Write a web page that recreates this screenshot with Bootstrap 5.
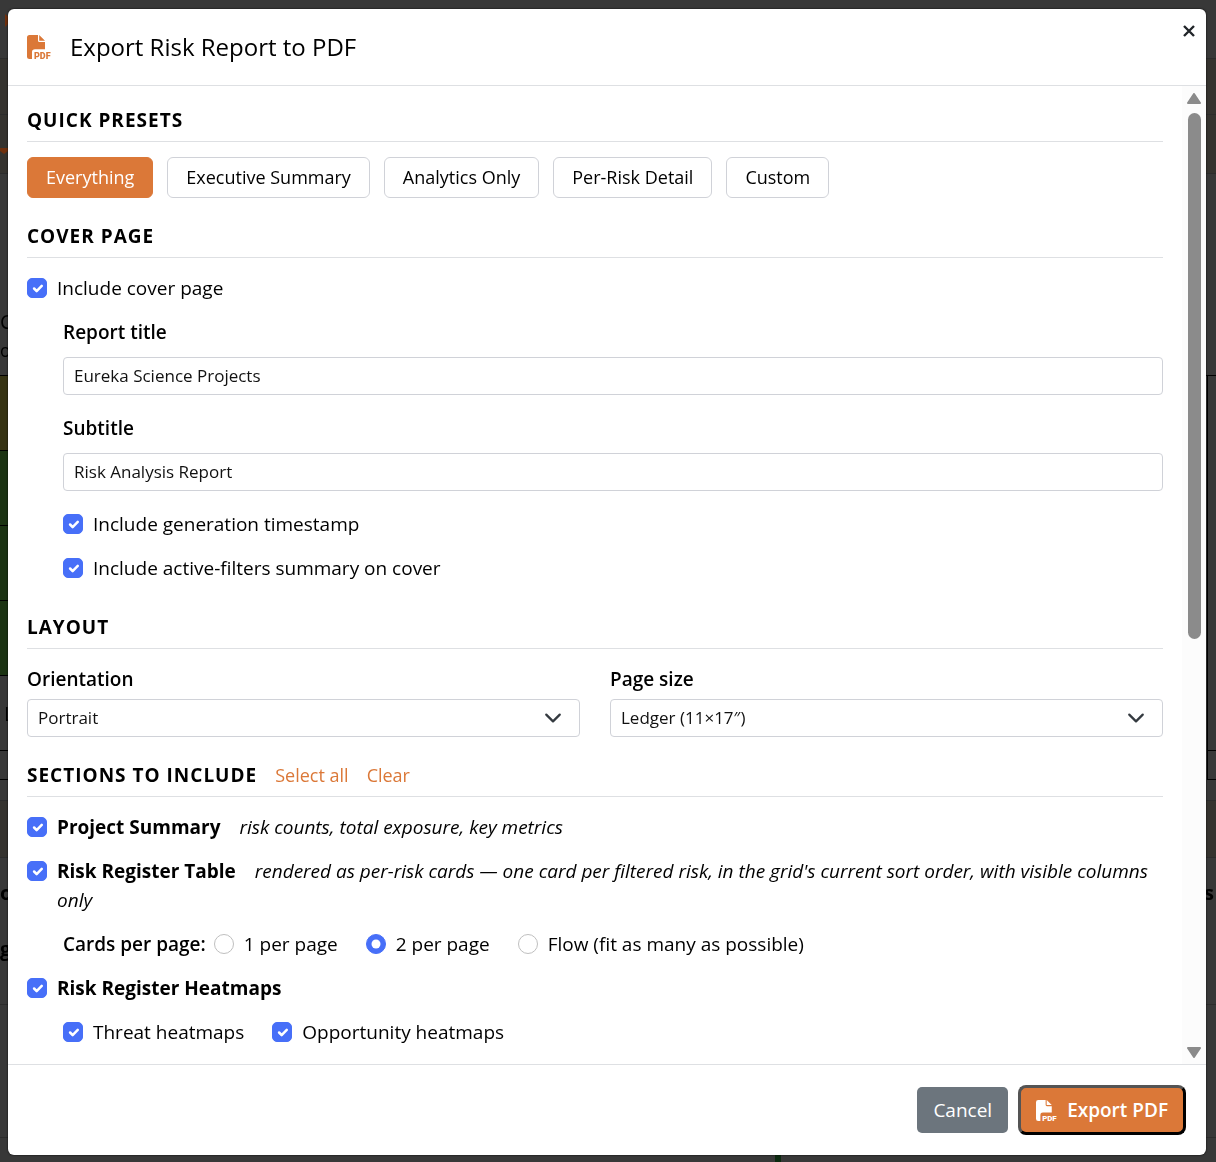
<!DOCTYPE html>
<html lang="en">
<head>
<meta charset="utf-8">
<meta name="viewport" content="width=device-width, initial-scale=1">
<title>Export Risk Report to PDF</title>
<link href="https://cdn.jsdelivr.net/npm/bootstrap@5.3.0/dist/css/bootstrap.min.css" rel="stylesheet">
<style>
:root{--accent:#db7838;--blue:#476ff8;--line:#dee0e3}
body{font-family:"Open Sans",sans-serif;font-size:19px;line-height:29px;color:#000;background:#383838}
/* dimmed page behind the dialog */
.under{position:fixed;inset:0;z-index:0;overflow:hidden;font-size:20px;color:#000}
.under .strip{width:12px;overflow:hidden}
.under .strip>div{border-bottom:1px solid #2c2c2c;flex:none;white-space:nowrap;line-height:28px;overflow:hidden}
.under .warm{background:#35332f}
.under .cell{border-color:#000!important}
.under .h59{height:59px}
.under .h56{height:56px}
.under .h202{height:202px}
.under .h75{height:75px}
.under .h29{height:29px}
.under .h21{height:21px}
.under .h57{height:57px}
.under .h147{height:147px}
.under .h133{height:133px}
.under .h375{height:375px}
.under .edge{border-left:1px solid #000;margin-left:3px}
.under .olive{background:#363313}
.under .green{background:#1b3312}
.under .sliver{width:6px;height:8px;background:#0c2a10;margin-left:64%}
.under .drop-name{padding-top:134px}
.under .drop-code{padding-top:24px}
.under .drop-word{padding-top:21px;font-weight:700;line-height:29px}
.shell{position:relative;z-index:1;height:100vh;min-height:700px;padding:9px 10px 7px 8px}
.dialog{border-radius:6px;background:#fff;box-shadow:0 0 2px #000;overflow:hidden}
.dlg-head{padding-left:19px;height:77px;border-bottom:1px solid var(--line)}
.dlg-head h1{font-size:24px;line-height:32px;font-weight:400;margin:0}
.dlg-head .title-row{gap:19px}
.dlg-close{border:0;background:none;padding:0;width:14px;height:14px;margin:15px 10px 0 0;display:flex}
.pdf-icon{color:var(--accent);overflow:visible;flex:none}
.pdf-icon text,.act text{font:900 9px Roboto,sans-serif}
.dlg-body{padding:20px 19px 0 19px;overflow:hidden}
.track{width:24px;background:#fcfcfc;padding:7px 0 6px}
.thumb{width:13px;border-radius:7px;background:#8b8b8b;flex:0 0 54.5%;margin-top:9px}
.sec{font-size:19px;line-height:28px;font-weight:700;letter-spacing:1px;margin:0}
.sec-bar{border-bottom:1px solid var(--line);padding-bottom:7px;margin-bottom:15px;gap:18px}
.sec-bar a{font-size:18px;line-height:28px;color:var(--accent);text-decoration:none}
.presets{gap:14px}
.preset{font-size:18px;line-height:27px;padding:6px 18px;border:1px solid #d0d2d8;border-radius:6px;background:#fff;color:#000}
.preset.on{background:var(--accent);border-color:var(--accent);color:#fff}
.tick{gap:10px;margin-bottom:14px}
.tick label,.lead-in{padding-top:1px}
.tick .form-check-input{width:20px;height:20px;margin:5px 0 0;flex:none;border-color:#bfbfbf}
.tick .form-check-input[type=checkbox]{border-radius:5px}
.tick .form-check-input:checked{background-color:var(--blue);border-color:var(--blue)}
.tick .form-check-input[type=checkbox]:checked{background-size:17px}
.tick i{margin-left:14px}
.choices{column-gap:28px}
.lead-in{font-weight:600;margin-right:-20px}
.inset{padding-left:36px}
.cap{font-weight:600;display:block;padding-top:1px;margin-bottom:5px}
.inset .cap{margin-bottom:10px}
.inset .field{margin-bottom:18px}
.field{font-size:17px;line-height:24px;padding:6px 10px;height:38px;border:1px solid #d0d2d8;border-radius:4px;color:#111}
.form-control.field{padding:5px 10px 7px}
.form-select.field{background-size:20px 18px;background-position:right 16px center}
.pair{--bs-gutter-x:30px}
.roomy{margin-bottom:30px}
.dlg-foot{height:91px;padding:0 20px;border-top:1px solid var(--line);gap:10px}
.act{font-size:19px;line-height:28px;color:#fff;border-radius:5px}
.act-no{background:#6c757d;border:0;padding:9px 16px}
.act-go{background:var(--accent);border:3px outset #000;border-radius:8px;padding:8px 15px;font-weight:600;gap:10px}
</style>
<script src="https://cdn.jsdelivr.net/npm/bootstrap@5.3.0/dist/js/bootstrap.bundle.min.js"></script>
</head>
<body>
<svg width="0" height="0" class="position-absolute" aria-hidden="true">
<symbol id="filepdf" viewBox="0 0 24 24" overflow="visible"><path fill="currentColor" d="M2.500 0H11V5.500Q11 7 12.500 7H18V14.200H8Q5 14.200 5 17V24H2.500Q0 24 0 21.500V2.500Q0 0 2.500 0ZM12.200 0L18 5.800H12.200Z"/></symbol>
</svg>
<div class="under d-flex justify-content-between" aria-hidden="true">
 <div class="strip d-flex flex-column">
  <div class="h59"><svg width="12" height="40"><path fill="#70300d" d="M5 14l7 6-7 7z"/></svg></div>
  <div class="warm h56"></div>
  <div class="warm h59"><svg width="12" height="50"><path fill="#70300d" d="M-4 33H12L4 39z"/></svg></div>
  <div class="cell h202 drop-name">C<br><small>o</small></div>
  <div class="cell h75 olive"></div>
  <div class="cell h75 green"></div>
  <div class="cell h75 green"></div>
  <div class="cell h75 green"></div>
  <div class="cell h75 drop-code ps-1">L</div>
  <div class="cell h29"></div>
  <div class="h21"></div>
  <div class="warm h57"></div>
  <div class="h147 drop-word">o<br><br>g</div>
  <div class="h133"></div>
 </div>
 <div class="flex-grow-1 align-self-end"><div class="sliver"></div></div>
 <div class="strip d-flex flex-column">
  <div class="h59"></div>
  <div class="warm h56"></div>
  <div class="warm h59"></div>
  <div class="cell h202"></div>
  <div class="cell h375 edge"></div>
  <div class="cell h29 edge"></div>
  <div class="h21"></div>
  <div class="warm h57"></div>
  <div class="h147 drop-word">s</div>
  <div class="h133"></div>
 </div>
</div>
<div class="shell">
<div class="dialog d-flex flex-column h-100" role="dialog" aria-labelledby="dlgTitle">
 <header class="dlg-head d-flex align-items-start flex-shrink-0">
  <div class="title-row d-flex align-items-center flex-grow-1 h-100">
   <svg class="pdf-icon" width="24" height="24" viewBox="0 0 24 24" aria-hidden="true"><use href="#filepdf" width="24" height="24"/><text x="7" y="24" fill="currentColor">PDF</text></svg>
   <h1 id="dlgTitle">Export Risk Report to PDF</h1>
  </div>
  <button type="button" class="dlg-close" aria-label="Close"><svg width="14" height="14" viewBox="0 0 14 14"><path d="M2 2l10 10M12 2L2 12" stroke="#212529" stroke-width="2.400"/></svg></button>
 </header>
 <div class="d-flex flex-grow-1 overflow-hidden">
  <main class="dlg-body flex-grow-1">
   <section class="mb-4">
    <div class="sec-bar"><h2 class="sec">QUICK PRESETS</h2></div>
    <div class="presets d-flex flex-wrap">
     <button type="button" class="preset on">Everything</button>
     <button type="button" class="preset">Executive Summary</button>
     <button type="button" class="preset">Analytics Only</button>
     <button type="button" class="preset">Per-Risk Detail</button>
     <button type="button" class="preset">Custom</button>
    </div>
   </section>
   <section class="roomy">
    <div class="sec-bar"><h2 class="sec">COVER PAGE</h2></div>
    <div class="tick d-flex"><input class="form-check-input" type="checkbox" id="cover" checked><label for="cover">Include cover page</label></div>
    <div class="inset">
     <label class="cap" for="reportTitle">Report title</label>
     <input type="text" class="form-control field" id="reportTitle" value="Eureka Science Projects">
     <label class="cap" for="subtitle">Subtitle</label>
     <input type="text" class="form-control field" id="subtitle" value="Risk Analysis Report">
     <div class="tick d-flex"><input class="form-check-input" type="checkbox" id="stamp" checked><label for="stamp">Include generation timestamp</label></div>
     <div class="tick d-flex"><input class="form-check-input" type="checkbox" id="filters" checked><label for="filters">Include active-filters summary on cover</label></div>
    </div>
   </section>
   <section class="mb-4">
    <div class="sec-bar"><h2 class="sec">LAYOUT</h2></div>
    <div class="row pair">
     <div class="col-6"><label class="cap" for="orient">Orientation</label><select class="form-select field" id="orient"><option>Portrait</option></select></div>
     <div class="col-6"><label class="cap" for="psize">Page size</label><select class="form-select field" id="psize"><option>Ledger (11×17″)</option></select></div>
    </div>
   </section>
   <section>
    <div class="sec-bar d-flex"><h2 class="sec">SECTIONS TO INCLUDE</h2><a href="#">Select all</a><a href="#">Clear</a></div>
    <div class="tick d-flex"><input class="form-check-input" type="checkbox" id="summary" checked><label for="summary"><b>Project Summary</b> <i>risk counts, total exposure, key metrics</i></label></div>
    <div class="tick d-flex"><input class="form-check-input" type="checkbox" id="register" checked><label for="register"><b>Risk Register Table</b> <i>rendered as per-risk cards — one card per filtered risk, in the grid's current sort order, with visible columns only</i></label></div>
    <div class="inset choices d-flex flex-wrap" role="radiogroup" aria-labelledby="perPage">
     <span class="lead-in" id="perPage">Cards per page:</span>
     <div class="tick d-flex"><input class="form-check-input" type="radio" name="cards" id="one"><label for="one">1 per page</label></div>
     <div class="tick d-flex"><input class="form-check-input" type="radio" name="cards" id="two" checked><label for="two">2 per page</label></div>
     <div class="tick d-flex"><input class="form-check-input" type="radio" name="cards" id="flow"><label for="flow">Flow (fit as many as possible)</label></div>
    </div>
    <div class="tick d-flex"><input class="form-check-input" type="checkbox" id="heat" checked><label for="heat"><b>Risk Register Heatmaps</b></label></div>
    <div class="inset choices d-flex flex-wrap">
     <div class="tick d-flex"><input class="form-check-input" type="checkbox" id="threat" checked><label for="threat">Threat heatmaps</label></div>
     <div class="tick d-flex"><input class="form-check-input" type="checkbox" id="opp" checked><label for="opp">Opportunity heatmaps</label></div>
    </div>
   </section>
  </main>
  <div class="track d-flex flex-column align-items-center flex-shrink-0" aria-hidden="true">
   <svg width="14" height="11" class="flex-shrink-0"><path fill="#8b8b8b" stroke="#8b8b8b" stroke-linejoin="round" stroke-width="2" d="M7 1L13 10H1z"/></svg>
   <div class="thumb"></div>
   <svg width="14" height="11" class="flex-shrink-0 mt-auto"><path fill="#8b8b8b" stroke="#8b8b8b" stroke-linejoin="round" stroke-width="2" d="M7 10L13 1H1z"/></svg>
  </div>
 </div>
 <footer class="dlg-foot d-flex align-items-center justify-content-end flex-shrink-0">
  <button type="button" class="act act-no">Cancel</button>
  <button type="button" class="act act-go d-flex align-items-center"><svg width="21" height="21" viewBox="0 0 24 24" overflow="visible" aria-hidden="true"><use href="#filepdf" width="24" height="24"/><text x="7" y="24" fill="currentColor">PDF</text></svg>Export PDF</button>
 </footer>
</div>
</div>
</body>
</html>
